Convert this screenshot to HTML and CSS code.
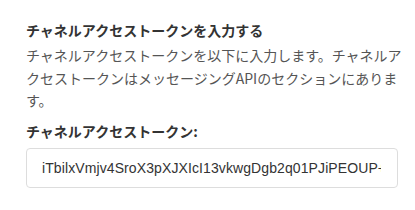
FILE: index.html
```html
<!DOCTYPE html>
<html lang="ja">
<head>
  <meta charset="UTF-8" />
  <meta name="viewport" content="width=device-width, initial-scale=1.0" />
  <title>チャネルアクセストークン</title>
  <link rel="stylesheet" href="styles.css">
</head>
<body>
  <div class="step">
    <h3 class="step-title">チャネルアクセストークンを入力する</h3>
    <p class="step-desc">チャネルアクセストークンを以下に入力します。チャネルアクセストークンはメッセージングAPIのセクションにあります。</p>

    <label class="field-label" for="token">チャネルアクセストークン:</label>
    <input class="field-input" type="text" id="token" value="iTbilxVmjv4SroX3pXJXIcI13vkwgDgb2q01PJiPEOUP+dFhYkQ2mA8sL0" />
  </div>
</body>
</html>
```

FILE: styles.css
```css
body, html {
  margin: 0;
  padding: 0;
  background: #fff;
  font-family: "Noto Sans CJK JP", "Liberation Sans", sans-serif;
}
.step {
  padding: 20px 0 0 26px;
  width: 386px;
}
.step-title {
  margin: 0;
  font-size: 14px;
  line-height: 20px;
  font-weight: bold;
  color: #333;
}
.step-desc {
  margin: 4px 0 0;
  font-size: 14px;
  line-height: 22.5px;
  color: #555;
}
.field-label {
  display: block;
  margin-top: 9px;
  font-size: 14px;
  line-height: 20px;
  font-weight: bold;
  color: #333;
}
.field-input {
  display: block;
  box-sizing: border-box;
  width: 372px;
  height: 40px;
  margin-top: 7px;
  padding: 0 16px 0 15px;
  border: 1px solid #ddd;
  border-radius: 4px;
  font-family: "Liberation Sans", sans-serif;
  font-size: 14px;
  letter-spacing: 0.1px;
  color: #333;
  background: #fff;
  outline: none;
}
```
